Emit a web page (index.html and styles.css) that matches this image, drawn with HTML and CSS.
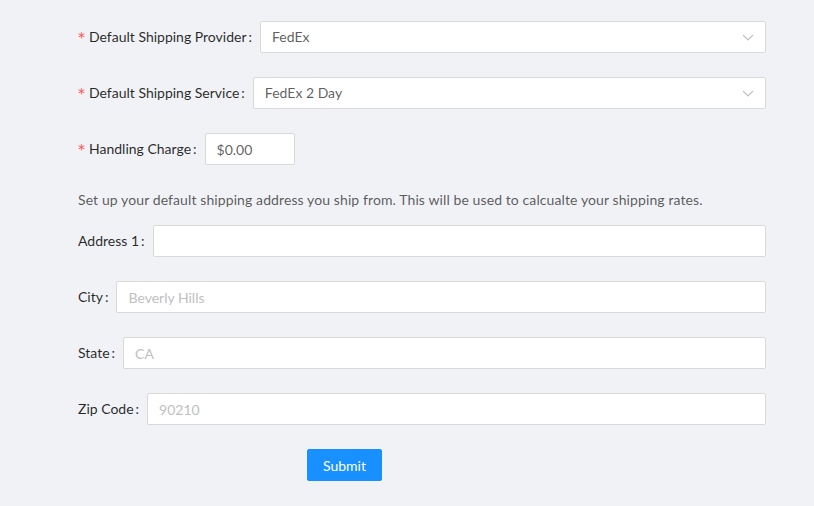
FILE: index.html
```html
<!DOCTYPE html>
<html lang="en">
  <head>
    <meta charset="UTF-8" />
    <meta name="viewport" content="width=device-width, initial-scale=1.0" />
    <title>Shipping Settings</title>
    <link rel="stylesheet" href="styles.css">
  </head>
  <body>
    <form class="ship_form" onsubmit="return false;">
      <!-- 배송 기본 설정 -->
      <div class="form_item">
        <label class="form_label required" for="provider">Default Shipping Provider</label>
        <div class="form_control">
          <div class="select_box" id="provider">
            <span class="select_value">FedEx</span>
            <svg class="select_arrow" viewBox="0 0 12 12" width="12" height="12"><path d="M1 4l5 5 5-5" fill="none" stroke="#bfbfbf" stroke-width="1.1"/></svg>
          </div>
        </div>
      </div>
      <div class="form_item">
        <label class="form_label required" for="service">Default Shipping Service</label>
        <div class="form_control">
          <div class="select_box" id="service">
            <span class="select_value">FedEx 2 Day</span>
            <svg class="select_arrow" viewBox="0 0 12 12" width="12" height="12"><path d="M1 4l5 5 5-5" fill="none" stroke="#bfbfbf" stroke-width="1.1"/></svg>
          </div>
        </div>
      </div>
      <div class="form_item">
        <label class="form_label required" for="handling">Handling Charge</label>
        <div class="form_control">
          <input class="text_input charge_input" id="handling" type="text" value="$0.00" />
        </div>
      </div>

      <!-- 출발지 주소 -->
      <p class="form_desc">Set up your default shipping address you ship from. This will be used to calcualte your shipping rates.</p>
      <div class="form_item">
        <label class="form_label" for="addr1">Address 1</label>
        <div class="form_control">
          <input class="text_input" id="addr1" type="text" />
        </div>
      </div>
      <div class="form_item">
        <label class="form_label" for="city">City</label>
        <div class="form_control">
          <input class="text_input" id="city" type="text" placeholder="Beverly Hills" />
        </div>
      </div>
      <div class="form_item">
        <label class="form_label" for="state">State</label>
        <div class="form_control">
          <input class="text_input" id="state" type="text" placeholder="CA" />
        </div>
      </div>
      <div class="form_item">
        <label class="form_label" for="zip">Zip Code</label>
        <div class="form_control">
          <input class="text_input" id="zip" type="text" placeholder="90210" />
        </div>
      </div>

      <div class="form_btns">
        <button class="btn_submit" type="submit">Submit</button>
      </div>
    </form>
  </body>
</html>
```

FILE: styles.css
```css
  body {
    margin: 0;
    background-color: #f0f2f5;
    font-family: Lato, "Noto Sans", sans-serif;
    font-size: 14px;
    color: rgba(0, 0, 0, 0.65);
  }

  .ship_form {
    padding: 21px 48px 0 78px;
  }

  /* 폼 한 줄 */
  .form_item {
    display: flex;
    align-items: center;
    margin-bottom: 24px;
  }

  .form_label {
    flex: none;
    height: 32px;
    line-height: 32px;
    color: rgba(0, 0, 0, 0.85);
    white-space: nowrap;
  }
  .form_label.required::before {
    content: "*";
    color: #ff4d4f;
    margin-right: 4px;
    font-family: "DejaVu Sans", sans-serif;
    font-size: 14px;
  }
  .form_label::after {
    content: ":";
    margin: 0 8px 0 2px;
  }

  .form_control {
    flex: 1;
  }

  .select_box,
  .text_input {
    box-sizing: border-box;
    width: 100%;
    height: 32px;
    padding: 4px 11px;
    background-color: #fff;
    border: 1px solid #d9d9d9;
    border-radius: 2px;
    font-family: inherit;
    font-size: 14px;
    color: rgba(0, 0, 0, 0.65);
    line-height: 22px;
  }

  .select_box {
    display: flex;
    align-items: center;
    justify-content: space-between;
  }

  .text_input::placeholder {
    color: #bfbfbf;
  }

  .charge_input {
    width: 90px;
  }

  .form_desc {
    margin: 0 0 14px;
    line-height: 22px;
    letter-spacing: 0.1px;
  }

  /* 제출 버튼 */
  .form_btns {
    padding-left: 229px;
  }
  .btn_submit {
    height: 32px;
    padding: 0 15px;
    background-color: #1890ff;
    border: 1px solid #1890ff;
    border-radius: 2px;
    color: #fff;
    font-family: inherit;
    font-size: 14px;
    box-shadow: 0 2px 0 rgba(0, 0, 0, 0.045);
    cursor: pointer;
  }
```
